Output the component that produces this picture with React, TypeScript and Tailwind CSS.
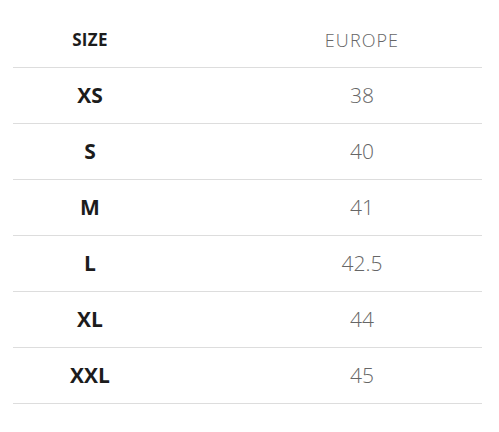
const rows = [
  { size: 'XS', eu: '38' },
  { size: 'S', eu: '40' },
  { size: 'M', eu: '41' },
  { size: 'L', eu: '42.5' },
  { size: 'XL', eu: '44' },
  { size: 'XXL', eu: '45' },
];

export default function App() {
  return (
    <div className="w-[499px] h-[432px] bg-white pt-[13px] px-[13px] font-['Open_Sans',sans-serif]">
      <div className="w-[469px]">
        {/* Header */}
        <div className="grid grid-cols-[154px_75px_240px] h-[55px] border-b border-[#dddddd] items-center">
          <div className="text-center text-[17px] font-bold text-[#1c1c1c] tracking-[0.02em]">SIZE</div>
          <div />
          <div className="text-center text-[18px] font-light text-[#666666] tracking-[0.06em]">EUROPE</div>
        </div>

        {/* Rows */}
        {rows.map((r) => (
          <div
            key={r.size}
            className="grid grid-cols-[154px_75px_240px] h-[56px] border-b border-[#dddddd] items-center"
          >
            <div className="text-center text-[21px] font-bold text-[#1c1c1c]">{r.size}</div>
            <div />
            <div className="text-center text-[21px] font-light text-[#666666]">{r.eu}</div>
          </div>
        ))}
      </div>
    </div>
  );
}
